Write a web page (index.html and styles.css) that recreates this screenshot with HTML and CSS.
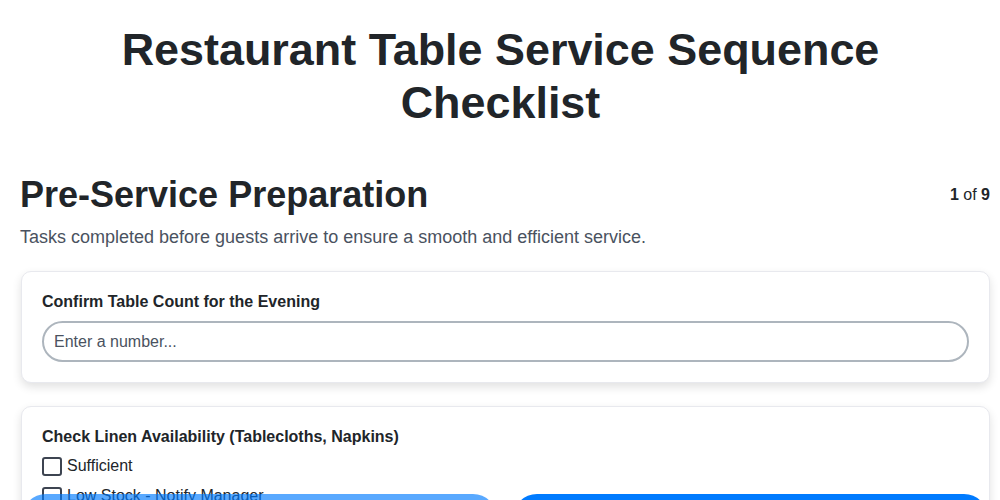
FILE: index.html
```html
<!DOCTYPE html>
<html lang="en">
<head>
<meta charset="utf-8">
<title>Restaurant Table Service Sequence Checklist</title>
<link rel="stylesheet" href="styles.css">
</head>
<body>
<div class="page">
  <h1 class="title">Restaurant Table Service Sequence Checklist</h1>
  <div class="section-head">
    <h2 class="section-title">Pre-Service Preparation</h2>
    <div class="progress"><b>1</b> of <b>9</b></div>
  </div>
  <p class="section-desc">Tasks completed before guests arrive to ensure a smooth and efficient service.</p>

  <div class="card">
    <label class="card-label" for="tables">Confirm Table Count for the Evening</label>
    <input class="text-input" id="tables" type="text" placeholder="Enter a number...">
  </div>

  <div class="card">
    <div class="card-label">Check Linen Availability (Tablecloths, Napkins)</div>
    <label class="option"><input type="checkbox" class="check"><span>Sufficient</span></label>
    <label class="option"><input type="checkbox" class="check"><span>Low Stock - Notify Manager</span></label>
    <label class="option"><input type="checkbox" class="check"><span>Out of Stock</span></label>
  </div>
</div>
<div class="footer">
  <button class="btn btn-prev" disabled>Previous</button>
  <button class="btn btn-next">Next</button>
</div>
</body>
</html>
```
FILE: styles.css
```css
html, body {
  margin: 0;
  padding: 0;
  background: #ffffff;
}
body {
  font-family: "Liberation Sans", Arial, sans-serif;
  color: #212529;
}
.page {
  padding: 24px 10px 80px 21px;
}
.title {
  margin: 0 auto 0 -10px;
  max-width: 800px;
  padding: 0 90px;
  font-size: 44.9px;
  line-height: 1.18;
  font-weight: 700;
  text-align: center;
  color: #212529;
}
.section-head {
  display: flex;
  justify-content: space-between;
  align-items: center;
  margin-top: 43px;
}
.section-title {
  margin: 0 0 0 -1px;
  font-size: 36px;
  line-height: 1.2;
  font-weight: 700;
  color: #212529;
}
.progress {
  font-size: 16px;
  color: #212529;
}
.section-desc {
  margin: 8px 0 20px -1px;
  font-size: 18px;
  line-height: 1.5;
  color: #4a5260;
}
.card {
  background: #ffffff;
  border: 1px solid #e8e9ee;
  border-radius: 10px;
  padding: 21px 20px 20px;
  margin-bottom: 23px;
  box-shadow: 0 4px 10px rgba(0, 0, 0, 0.12);
}
.card-label {
  display: block;
  font-size: 16px;
  line-height: 18px;
  font-weight: 700;
  color: #212529;
  margin-bottom: 10px;
}
.text-input {
  display: block;
  box-sizing: border-box;
  width: 100%;
  height: 41px;
  padding: 0 10px;
  border: 2px solid #adb5bd;
  border-radius: 21px;
  font-family: "Liberation Sans", Arial, sans-serif;
  font-size: 16px;
  color: #212529;
  background: #fff;
  outline: none;
}
.text-input::placeholder {
  color: #4a5260;
  opacity: 1;
}
.option {
  display: flex;
  align-items: center;
  gap: 5px;
  height: 20px;
  margin-bottom: 10px;
  font-size: 16px;
  color: #212529;
}
.check {
  appearance: none;
  -webkit-appearance: none;
  box-sizing: border-box;
  width: 20px;
  height: 19px;
  margin: 0;
  border: 2px solid #3d4451;
  border-radius: 3px;
  background: #fff;
}
.footer {
  position: fixed;
  left: 0;
  right: 0;
  top: 494px;
  display: flex;
  gap: 16px;
  padding: 0 12px 0 22px;
}
.btn {
  flex: 1;
  height: 48px;
  border: none;
  border-radius: 24px;
  background: #007bff;
  color: #fff;
  font-family: "Liberation Sans", Arial, sans-serif;
  font-size: 16px;
  font-weight: 700;
}
.btn-prev {
  opacity: 0.65;
}
```
